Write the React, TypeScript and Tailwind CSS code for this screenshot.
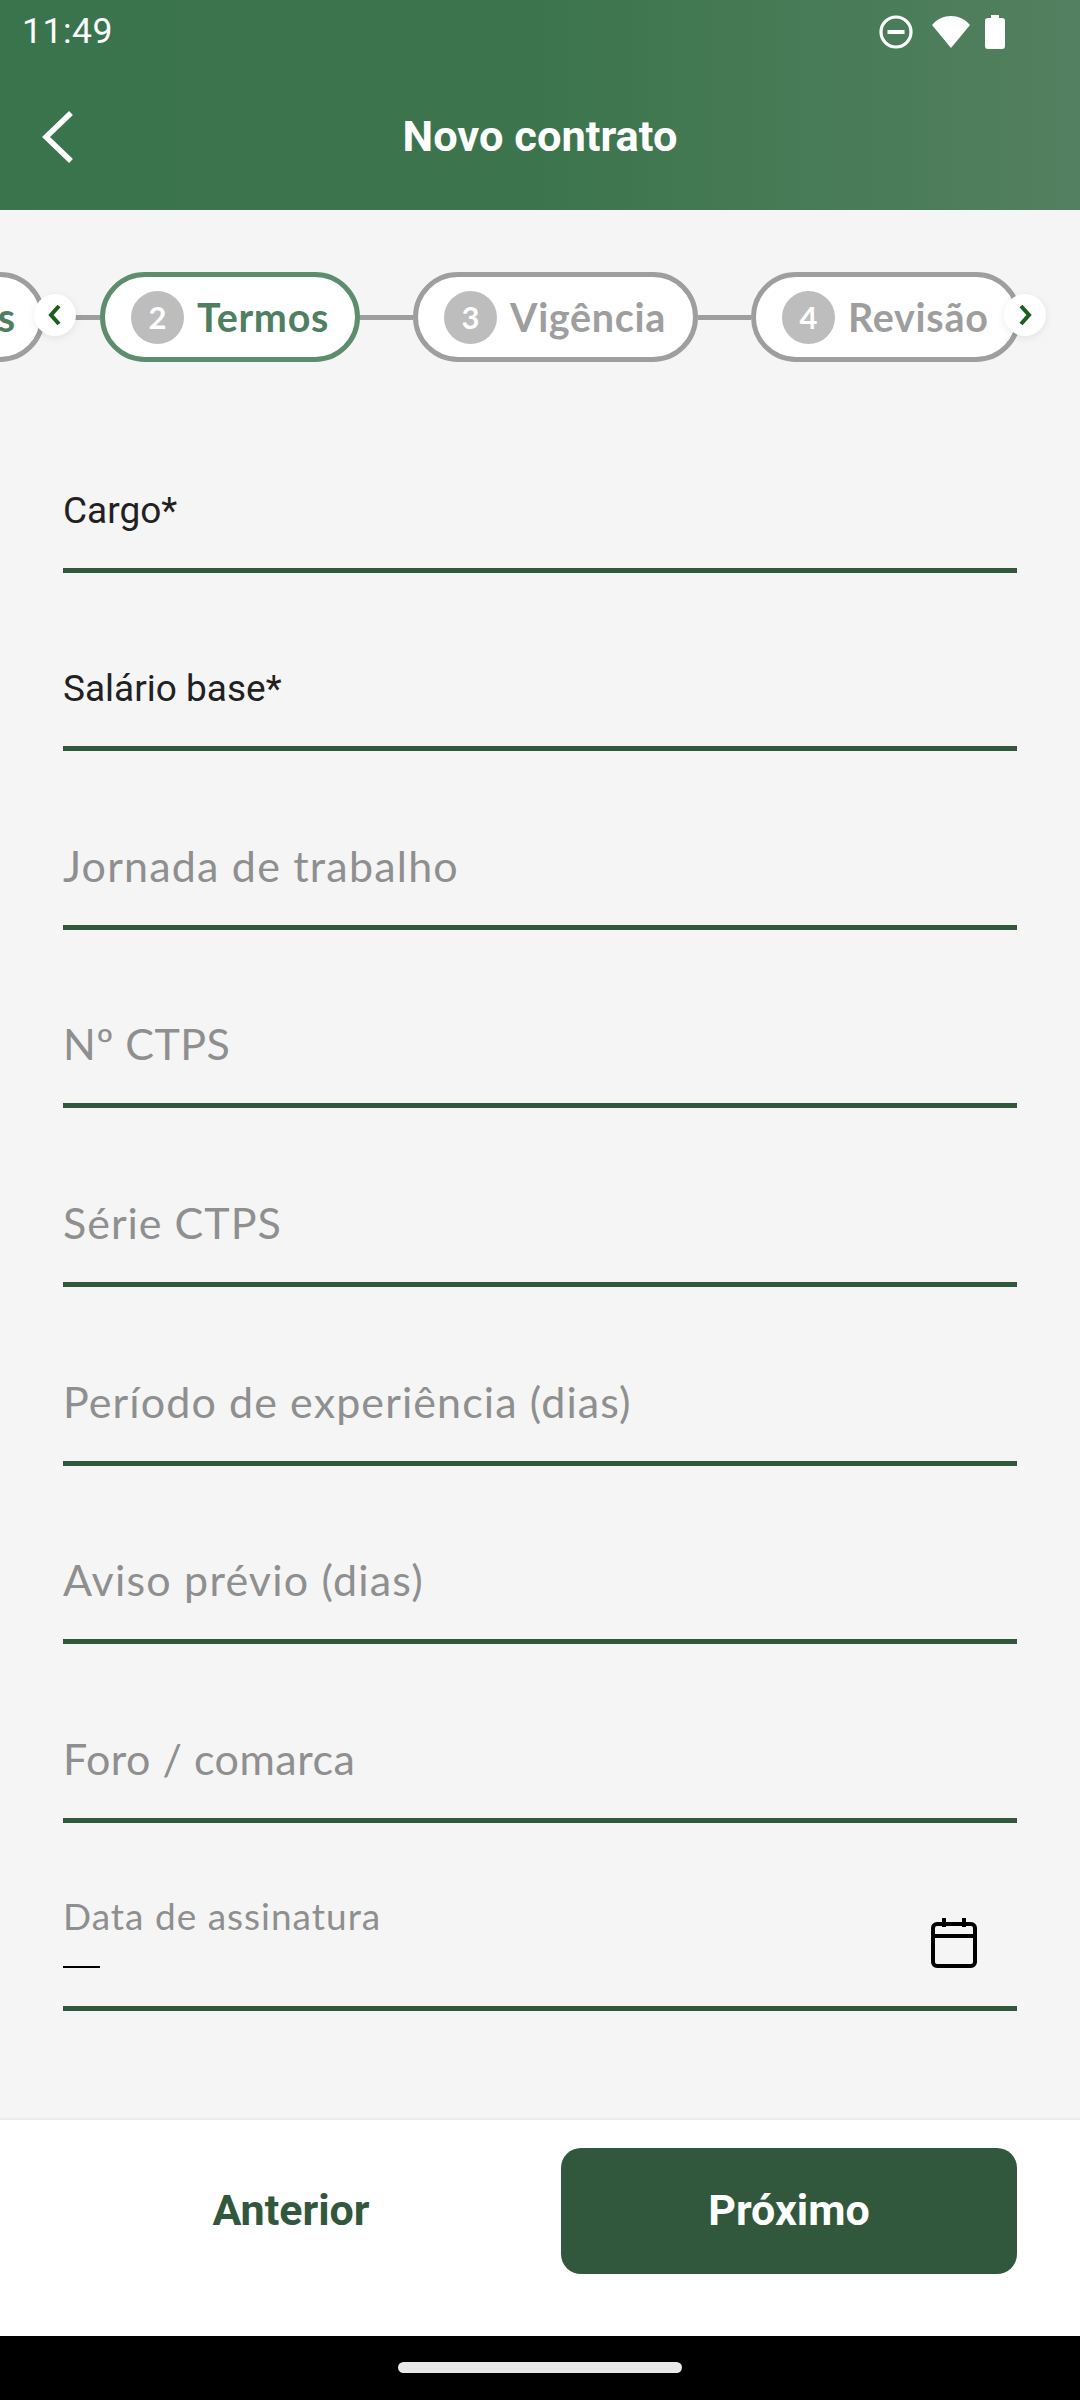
function Pill({ n, label, active, w }: { n: string; label: string; active?: boolean; w: string }) {
  return (
    <div className={`flex items-center shrink-0 h-[90px] rounded-full border-[5px] bg-white pl-[26px] ${w} ${active ? "border-[#5c8d6e]" : "border-[#9e9e9e]"}`}>
      <span className="flex items-center justify-center w-[53px] h-[53px] rounded-full bg-[#bdbdbd] text-white text-[31px] font-['Lato',sans-serif] font-bold">{n}</span>
      <span className={`ml-[13px] text-[39.5px] font-bold tracking-[0.7px] font-['Lato',sans-serif] ${active ? "text-[#4f7e61]" : "text-[#9e9e9e]"}`}>{label}</span>
    </div>
  );
}

function Connector({ w }: { w: string }) {
  return <div className={`h-[5px] bg-[#9e9e9e] shrink-0 ${w}`} />;
}

function ArrowButton({ dir, side }: { dir: "l" | "r"; side: string }) {
  return (
    <div className={`absolute top-[294px] ${side} w-[42px] h-[42px] rounded-full bg-white shadow-[0_2px_8px_rgba(0,0,0,0.08)] flex items-center justify-center`}>
      <svg width="18" height="24" viewBox="0 0 18 24" fill="none" stroke="#1b5e20" strokeWidth="4">
        <path d={dir === "l" ? "M13 3 L5 12 L13 21" : "M5 3 L13 12 L5 21"} />
      </svg>
    </div>
  );
}

function Field({ label, filled, tracking }: { label: string; filled?: boolean; tracking?: string }) {
  return (
    <div className={`h-[178.6px] mx-[63px] border-b-[5px] border-[#31583d] flex items-end shrink-0 ${filled ? "pb-[36px]" : "pb-[33px]"}`}>
      {filled ? (
        <span className="text-[37px] leading-[42px] text-[#212121] font-['Roboto',sans-serif]">{label}</span>
      ) : (
        <span className={`text-[43px] leading-[52px] text-[#8f8f8f] font-['Lato',sans-serif] ${tracking ?? "tracking-[1px]"}`}>{label}</span>
      )}
    </div>
  );
}

export default function App() {
  return (
    <div className="relative w-[1080px] h-[2400px] overflow-hidden flex flex-col bg-[#f5f5f5]">
      <header className="h-[210px] shrink-0 bg-[linear-gradient(90deg,#3a744c_0%,#3c754d_50%,#538060_100%)] text-white flex flex-col">
        <div className="h-[64px] flex items-center justify-between pl-[22px] pr-[75px]">
          <span className="text-[35.5px] font-['Roboto',sans-serif] tracking-[0.5px]">11:49</span>
          <div className="flex items-center">
            <svg width="34" height="34" viewBox="0 0 34 34" fill="none" stroke="white" strokeWidth="3.2">
              <circle cx="17" cy="17" r="15" />
              <path d="M8.5 17 H25.5" strokeWidth="4" />
            </svg>
            <svg className="ml-[18px]" width="40" height="34" viewBox="0 0 40 34" fill="white">
              <path d="M20 33 L1 10 C6 4 13 1 20 1 C27 1 34 4 39 10 Z" />
            </svg>
            <svg className="ml-[14px]" width="20" height="34" viewBox="0 0 20 34" fill="white">
              <path d="M6 0 H14 V3 H17 C19 3 20 4 20 6 V31 C20 33 19 34 17 34 H3 C1 34 0 33 0 31 V6 C0 4 1 3 3 3 H6 Z" />
            </svg>
          </div>
        </div>
        <div className="relative flex-1 flex items-center justify-center -mt-[10px]">
          <svg className="absolute left-[38px] top-[52px]" width="40" height="60" viewBox="0 0 40 60" fill="none" stroke="white" strokeWidth="5.5">
            <path d="M33 7 L8 31 L33 55" />
          </svg>
          <span className="text-[43.4px] font-bold font-['Roboto',sans-serif] mt-[9px]">Novo contrato</span>
        </div>
      </header>

      <div className="h-[152px] shrink-0 flex items-start pt-[62px] overflow-hidden">
        <div className="flex items-center ml-[-100px] w-max">
          <div className="flex items-center justify-end shrink-0 h-[90px] w-[145px] rounded-full border-[5px] border-[#9e9e9e] bg-white pr-[25px]">
            <span className="text-[39.5px] font-bold font-['Lato',sans-serif] text-[#4f7e61]">s</span>
          </div>
          <Connector w="w-[55px]" />
          <Pill n="2" label="Termos" active w="w-[260px]" />
          <Connector w="w-[53px]" />
          <Pill n="3" label="Vigência" w="w-[285px]" />
          <Connector w="w-[53px]" />
          <Pill n="4" label="Revisão" w="w-[270px]" />
        </div>
      </div>

      <main className="flex-1 flex flex-col mt-[32px]">
        <Field label="Cargo*" filled />
        <Field label="Salário base*" filled />
        <Field label="Jornada de trabalho" tracking="tracking-[1.2px]" />
        <Field label="Nº CTPS" tracking="tracking-[0.4px]" />
        <Field label="Série CTPS" />
        <Field label="Período de experiência (dias)" tracking="tracking-[1.1px]" />
        <Field label="Aviso prévio (dias)" tracking="tracking-[1.2px]" />
        <Field label="Foro / comarca" tracking="tracking-[0.5px]" />
        <div className="relative h-[188px] mx-[63px] border-b-[5px] border-[#31583d] shrink-0">
          <div className="absolute left-0 top-[72px] text-[37px] leading-[42px] tracking-[1px] text-[#8f8f8f] font-['Lato',sans-serif]">Data de assinatura</div>
          <div className="absolute left-0 top-[143px] w-[37px] h-[2px] bg-black" />
          <svg className="absolute right-[40px] top-[95px]" width="46" height="50" viewBox="0 0 46 50" fill="none" stroke="black" strokeWidth="4">
            <rect x="2" y="6" width="42" height="42" rx="4" />
            <path d="M2 18 H44" />
            <path d="M13 0 V9 M33 0 V9" />
          </svg>
        </div>
      </main>

      <footer className="h-[218px] shrink-0 bg-white border-t-[2px] border-[#ececec] flex items-start pt-[28px] pr-[63px]">
        <button className="w-[561px] h-[126px] flex items-center justify-center text-[43px] font-bold text-[#31583d] font-['Roboto',sans-serif] pl-[21px] pb-[2px]">Anterior</button>
        <button className="w-[456px] h-[126px] rounded-[20px] bg-[#31583d] text-white text-[43px] font-bold font-['Roboto',sans-serif] pb-[2px]">Próximo</button>
      </footer>

      <div className="h-[64px] shrink-0 bg-black flex items-center justify-center">
        <div className="w-[284px] h-[11px] rounded-full bg-[#e8e8e8] -mt-[2px]" />
      </div>

      <ArrowButton dir="l" side="left-[34px]" />
      <ArrowButton dir="r" side="left-[1004px]" />
    </div>
  );
}
